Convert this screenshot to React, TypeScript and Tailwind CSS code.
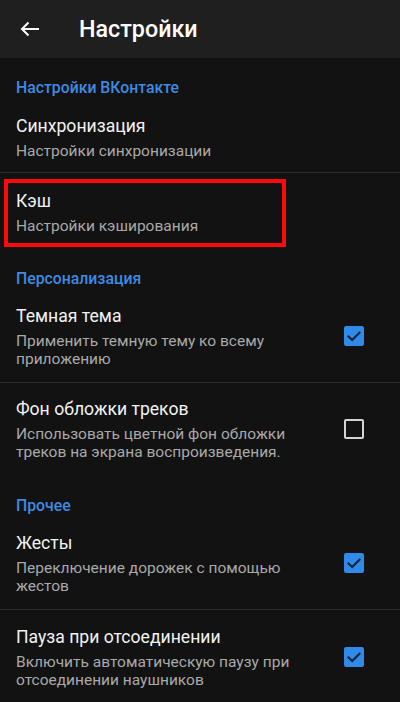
import React from "react";

function Check({ on }: { on: boolean }) {
  if (on) {
    return (
      <div className="w-[20px] h-[20px] rounded-[2px] bg-[#2f8ae8] flex items-center justify-center shrink-0">
        <svg width="14" height="11" viewBox="0 0 14 11" fill="none">
          <path d="M1.5 5.5 L5.2 9 L12.5 1.8" stroke="#10243d" strokeWidth="2.2" strokeLinecap="square" />
        </svg>
      </div>
    );
  }
  return <div className="w-[20px] h-[20px] rounded-[2px] border-2 border-[#d4d4d4] shrink-0" />;
}

function Section({ title, pt }: { title: string; pt: string }) {
  return (
    <div className={`${pt} px-[16px] text-[15.8px] leading-[20px] font-medium text-[#3f8ae2]`}>{title}</div>
  );
}

function Item({
  title,
  sub,
  check,
  pt = "pt-[15px]",
  pb = "pb-[14px]",
  divider,
  highlight,
}: {
  title: string;
  sub: React.ReactNode;
  check?: boolean;
  pt?: string;
  pb?: string;
  divider?: boolean;
  highlight?: boolean;
}) {
  return (
    <div className={`relative flex items-center ${pt} ${pb} pl-[16px] pr-[36px] ${divider ? "border-b border-[#2b2b2b]" : ""}`}>
      <div className="flex-1 min-w-0 pr-[20px]">
        <div className="text-[17.6px] leading-[24px] text-[#f2f2f2]">{title}</div>
        <div className="mt-[4px] text-[15.5px] leading-[18px] text-[#a9a9a9]">{sub}</div>
      </div>
      {check !== undefined && <Check on={check} />}
      {highlight && (
        <div className="absolute top-[6px] left-[4px] w-[282px] h-[68px] border-4 border-[#ff0a0a]" />
      )}
    </div>
  );
}

export default function App() {
  return (
    <div
      className="w-[400px] h-[702px] bg-[#121212] overflow-hidden"
      style={{ fontFamily: "Roboto, 'Noto Sans', sans-serif" }}
    >
      <div className="h-[58px] bg-[#1f1f1f] flex items-center">
        <div className="w-[79px] flex items-center pl-[20px]">
          <svg width="20" height="16" viewBox="0 0 20 16" fill="none">
            <path d="M19 8 H2 M8.5 1.5 L2 8 L8.5 14.5" stroke="#ffffff" strokeWidth="2" />
          </svg>
        </div>
        <div className="text-[23.3px] leading-[28px] font-medium text-white">Настройки</div>
      </div>

      <Section title="Настройки ВКонтакте" pt="pt-[20px]" />
      <Item title="Синхронизация" sub="Настройки синхронизации" pt="pt-[16px]" pb="pb-[12px]" divider />
      <Item title="Кэш" sub="Настройки кэширования" pt="pt-[16px]" pb="pb-[12px]" highlight />

      <Section title="Персонализация" pt="pt-[22px]" />
      <Item title="Темная тема" sub="Применить темную тему ко всему приложению" check={true} divider />
      <Item
        title="Фон обложки треков"
        sub="Использовать цветной фон обложки треков на экрана воспроизведения."
        check={false}
        pt="pt-[14px]"
        pb="pb-[13px]"
      />

      <Section title="Прочее" pt="pt-[22px]" />
      <Item title="Жесты" sub="Переключение дорожек с помощью жестов" check={true} divider />
      <Item title="Пауза при отсоединении" sub="Включить автоматическую паузу при отсоединении наушников" check={true} />
    </div>
  );
}
